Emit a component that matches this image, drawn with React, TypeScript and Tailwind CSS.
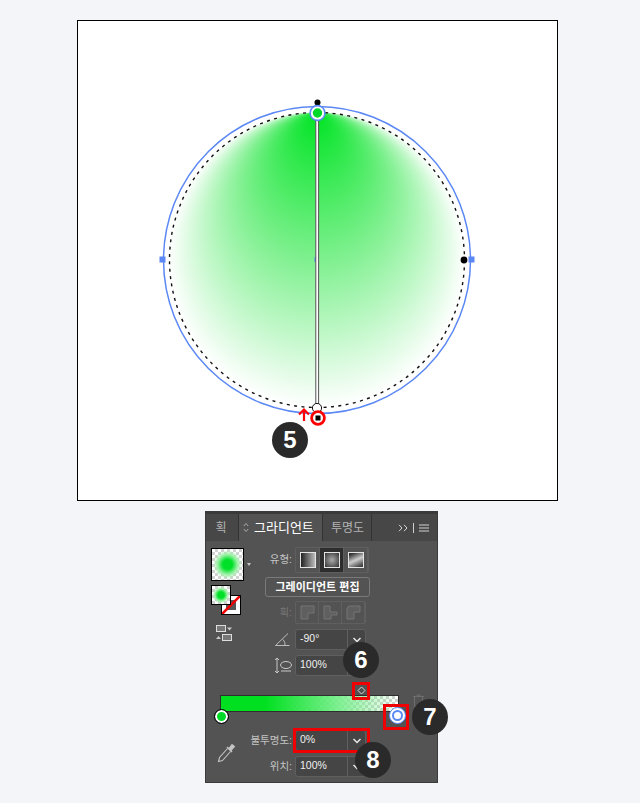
const checker = 'bg-[image:repeating-conic-gradient(#d2d2d2_0_25%,#ffffff_0_50%)] bg-[length:6px_6px]';
const fontKr = 'font-["Liberation_Sans","Noto_Sans_CJK_KR",sans-serif]';

function Badge({ n, className }: { n: string; className: string }) {
  return (
    <div className={`absolute flex h-9 w-9 items-center justify-center rounded-full bg-[#2a2a2a] text-[24px] font-bold text-white ${className}`}>
      {n}
    </div>
  );
}

function RedBox({ className }: { className: string }) {
  return <div className={`absolute border-[3px] border-[#f00000] ${className}`} />;
}

function Chevron() {
  return (
    <svg width="10" height="6" viewBox="0 0 10 6" fill="none" stroke="#e8e8e8" strokeWidth="1.5">
      <path d="M1.5 1 5 4.5 8.5 1" />
    </svg>
  );
}

function ComboField({ value, className = '' }: { value: string; className?: string }) {
  return (
    <div className={`flex h-[21px] w-[71px] rounded-[3px] border border-[#5f5f5f] bg-[#454545] text-[10.5px] text-[#f0f0f0] ${className}`}>
      <div className="flex w-[52px] items-center border-r border-[#5f5f5f] pb-[1px] pl-1">{value}</div>
      <div className="flex flex-1 items-center justify-center">
        <Chevron />
      </div>
    </div>
  );
}

function Canvas() {
  return (
    <div className="relative ml-[77px] mt-[20px] h-[481px] w-[481px] border border-black bg-white">
      <svg className="block h-full w-full" viewBox="78 21 479 479">
        <defs>
          <radialGradient id="fillGrad" gradientUnits="userSpaceOnUse" cx="317" cy="260" r="148" fx="317" fy="113">
            <stop offset="0" stopColor="#00e424" />
            <stop offset="0.5" stopColor="#7ff08f" />
            <stop offset="1" stopColor="#ffffff" />
          </radialGradient>
        </defs>
        <circle cx="317" cy="260" r="148" fill="url(#fillGrad)" />
        <circle cx="317" cy="260" r="147.5" fill="none" stroke="#111" strokeWidth="1.4" strokeDasharray="3 4.4" />
        <circle cx="317" cy="260" r="153.5" fill="none" stroke="#5b88f5" strokeWidth="1.5" />
        <rect x="159.500" y="256.500" width="6" height="6" fill="#5b88f5" />
        <rect x="468.500" y="256.500" width="6" height="6" fill="#5b88f5" />
        <rect x="314.5" y="257" width="2" height="5" fill="#5b88f5" />
        <circle cx="464" cy="260" r="3.400" fill="#000" />
        <circle cx="317.5" cy="102.5" r="3" fill="#000" />
        <rect x="315.8" y="118" width="2.8" height="286" fill="#fff" stroke="#555" strokeWidth="1" />
        <circle cx="317.5" cy="113" r="6" fill="#00d928" stroke="#fff" strokeWidth="2.6" />
        <circle cx="317.5" cy="113" r="7.4" fill="none" stroke="#5b88f5" strokeWidth="1.6" />
        <circle cx="317" cy="408" r="4.6" fill="#fff" stroke="#111" strokeWidth="1" />
        <circle cx="318" cy="418" r="6.400" fill="#fff" stroke="#ff0000" strokeWidth="2.800" />
        <rect x="315.500" y="415.500" width="5" height="5" fill="#000" />
        <path d="M304 421V410M299 414.5 304 409.5 309 414.5" fill="none" stroke="#ff0000" strokeWidth="2.200" />
      </svg>
      <Badge n="5" className="left-[194px] top-[401px]" />
    </div>
  );
}

function Tabs() {
  return (
    <div className="flex h-[30px] border-t-[3px] border-[#3a3a3a] bg-[#474747] text-[#b4b4b4]">
      <div className="flex w-[33px] items-center justify-center border-r border-[#333] pr-[2px] text-[12px]">획</div>
      <div className="flex w-[84px] items-center gap-[5px] border-r border-[#333] bg-[#535353] pl-[4px] text-[13px] text-white">
        <svg width="6" height="11" viewBox="0 0 6 11" fill="none" stroke="#aaa">
          <path d="M.8 4 3 1.5 5.2 4M.8 7 3 9.5 5.2 7" />
        </svg>
        그라디언트
      </div>
      <div className="flex w-[49px] items-center justify-center border-r border-[#333] pl-[1px] text-[12px]">투명도</div>
      <div className="flex flex-1 items-center justify-end gap-[5px] pr-[8px]">
        <svg width="10" height="8" viewBox="0 0 10 8" fill="none" stroke="#d8d8d8">
          <path d="M1 .8 4 4 1 7.2M6 .8 9 4 6 7.2" />
        </svg>
        <span className="h-[10px] w-px bg-[#cfcfcf]" />
        <svg width="10" height="8" viewBox="0 0 10 8" stroke="#d0d0d0">
          <path d="M0 1h10M0 4h10M0 7h10" />
        </svg>
      </div>
    </div>
  );
}

function Swatches() {
  return (
    <div className="relative w-[58px] shrink-0 pl-[5px] pt-[7px]">
      <div className="flex items-center gap-[3px]">
        <div className={`h-[33px] w-[33px] border border-black ${checker}`}>
          <div className="h-full w-full bg-[radial-gradient(circle,#00e028_0,#00e028_22%,#9ef2a8_46%,rgba(255,255,255,0)_66%)]" />
        </div>
        <div className="h-0 w-0 border-x-[2.5px] border-t-[3px] border-x-transparent border-t-[#c8c8c8]" />
      </div>
      <div className="relative mt-[4px] h-[30px] w-[30px]">
        <div className="absolute left-[10px] top-[10px] h-[20px] w-[20px] overflow-hidden border border-black bg-white">
          <div className="absolute inset-[4px] bg-[#555]" />
          <svg className="absolute inset-0" viewBox="0 0 18 18" stroke="#f00000" strokeWidth="2.6">
            <path d="M0 18 18 0" />
          </svg>
        </div>
        <div className={`absolute left-0 top-0 h-[20px] w-[20px] border border-black ${checker}`}>
          <div className="h-full w-full bg-[radial-gradient(circle,#00e028_0,#00e028_25%,#9ef2a8_48%,rgba(255,255,255,0)_68%)]" />
        </div>
      </div>
      <svg className="ml-[5px] mt-[10px]" width="16" height="16" viewBox="0 0 16 16">
        <rect x="0.5" y="0.5" width="9" height="6" fill="#777" stroke="#ddd" />
        <path d="M11 2.5h5l-2.5 3z" fill="#ccc" />
        <rect x="6.5" y="9.5" width="9" height="6" fill="#777" stroke="#ddd" />
        <path d="M0 14h5L2.500 11z" fill="#ccc" />
      </svg>
    </div>
  );
}

function TypeIcon({ bg, active }: { bg: string; active?: boolean }) {
  return (
    <div className={`flex h-[24px] w-[24px] items-center justify-center border-r border-[#5f5f5f] ${active ? 'bg-[#2d2d2d]' : ''}`}>
      <div className={`h-[16px] w-[16px] border border-[#e4e4e4] ${bg}`} />
    </div>
  );
}

function StrokeIcon({ d }: { d: string }) {
  return (
    <div className="flex h-[21px] w-[23px] items-center justify-center border-r border-[#5f5f5f]">
      <svg width="15" height="15" viewBox="0 0 15 15" fill="#5f5f5f" stroke="#757575">
        <path d={d} />
      </svg>
    </div>
  );
}

function Controls() {
  return (
    <div className="flex-1 pt-[6px]">
      <div className="flex items-center">
        <div className="w-[31px] pr-[3px] text-right text-[10.5px] text-[#c4c4c4]">유형:</div>
        <div className="flex rounded-[2px] border border-[#5f5f5f]">
          <TypeIcon bg="bg-[linear-gradient(90deg,#222,#bbb)]" />
          <TypeIcon active bg="bg-[radial-gradient(circle,#aaa,#333)]" />
          <TypeIcon bg="bg-[linear-gradient(155deg,#333_10%,#ccc_50%,#444_90%)]" />
        </div>
      </div>
      <div className="ml-[1px] mt-[4px] flex h-[20px] w-[105px] items-center justify-center rounded-[3px] border border-[#7a7a7a] text-[11px] font-bold text-white">
        그레이디언트 편집
      </div>
      <div className="mt-[4px] flex items-center">
        <div className="w-[31px] pr-[3px] text-right text-[10.5px] text-[#777]">획:</div>
        <div className="flex rounded-[2px] border border-[#5f5f5f]">
          <StrokeIcon d="M1 14V1h13v7H8v6z" />
          <StrokeIcon d="M1 1h6v6h7v3H8v4H1z" />
          <StrokeIcon d="M1 14V3l2-2h11v6H8v7z" />
        </div>
      </div>
      <div className="mt-[5px] flex items-center">
        <div className="flex w-[31px] justify-end pr-[5px]">
          <svg width="16" height="15" viewBox="0 0 16 15" fill="none" stroke="#bdbdbd">
            <path d="M14 1.500 1.500 13.500H15.500M9 7.500Q11.500 10 11 13.500" />
          </svg>
        </div>
        <ComboField value="-90°" />
      </div>
      <div className="mt-[5px] flex items-center">
        <div className="flex w-[31px] justify-end pr-[3px]">
          <svg width="18" height="17" viewBox="0 0 18 17" fill="none" stroke="#c8c8c8">
            <path d="M3 1v15M1 3l2-2 2 2M1 14l2 2 2-2" />
            <ellipse cx="12" cy="8" rx="5.500" ry="3.500" />
            <path d="M7 14h10" />
          </svg>
        </div>
        <ComboField value="100%" />
      </div>
    </div>
  );
}

function GradientRow() {
  return (
    <div className="relative mx-[14px] mt-[19px] h-[35px]">
      <div className={`h-[17px] w-[179px] border border-[#2e2e2e] ${checker}`}>
        <div className="h-full w-full bg-[linear-gradient(90deg,#00e020_0%,#00e020_25%,rgba(120,240,140,0.9)_68%,rgba(255,255,255,0)_100%)]" />
      </div>
      <svg className="absolute left-[137px] top-[-9px]" width="9" height="9" viewBox="0 0 9 9" fill="#4d4d4d" stroke="#d8d8d8">
        <path d="M4.500 1 8 4.500 4.500 8 1 4.500z" />
      </svg>
      <div className="absolute left-[-5px] top-[15px] h-[13px] w-[13px] rounded-full border-2 border-white bg-[#00d928] outline outline-1 outline-black" />
      <div className="absolute left-[169px] top-[12px] flex h-[17px] w-[17px] items-center justify-center rounded-full border-[1.5px] border-[#5b88f5] bg-white">
        <div className="h-[11px] w-[11px] rounded-full border-2 border-[#5b88f5] bg-white" />
      </div>
      <svg className="absolute left-[193px] top-[-1px]" width="11" height="13" viewBox="0 0 11 13" fill="none" stroke="#6e6e6e">
        <path d="M0 2.500h11M4 2.500V1h3v1.500M1.500 3v9.500h8V3" />
      </svg>
    </div>
  );
}

function BottomRows() {
  return (
    <div className="flex">
      <div className="w-[44px] shrink-0 pl-[11px] pt-[13px]">
        <svg width="19" height="20" viewBox="0 0 19 20" fill="none" stroke="#c4c4c4" strokeWidth="1.100">
          <path d="M10.500 5.500 2.500 14.500 1.500 18.500 5.500 17.500 13.500 8.500" />
          <path d="M10 4l5 5" strokeWidth="1.600" />
          <path d="M12 5.500 15 1.500 17.500 3.500 14 7.500z" fill="#c4c4c4" />
        </svg>
      </div>
      <div>
        <div className="flex items-center">
          <div className="w-[45px] pr-[3px] text-right text-[10.5px] whitespace-nowrap text-[#c4c4c4]">불투명도:</div>
          <ComboField value="0%" />
        </div>
        <div className="mt-[5px] flex items-center">
          <div className="w-[45px] pr-[3px] text-right text-[10.5px] text-[#c4c4c4]">위치:</div>
          <ComboField value="100%" />
        </div>
      </div>
    </div>
  );
}

export default function App() {
  return (
    <div className={`h-[803px] w-[640px] overflow-hidden bg-[#f3f5f9] ${fontKr}`}>
      <Canvas />
      <div className="relative ml-[205px] mt-[10px] h-[272px] w-[233px] border-x border-b border-[#3a3a3a] bg-[#535353]">
        <Tabs />
        <div className="flex">
          <Swatches />
          <Controls />
        </div>
        <GradientRow />
        <BottomRows />
        <RedBox className="left-[146px] top-[171px] h-[18px] w-[18px]" />
        <RedBox className="left-[177px] top-[193px] h-[26px] w-[26px]" />
        <RedBox className="left-[87px] top-[217px] h-[25px] w-[77px]" />
        <Badge n="6" className="left-[137px] top-[131px]" />
        <Badge n="7" className="left-[206px] top-[188px]" />
        <Badge n="8" className="left-[149px] top-[231px]" />
      </div>
    </div>
  );
}
